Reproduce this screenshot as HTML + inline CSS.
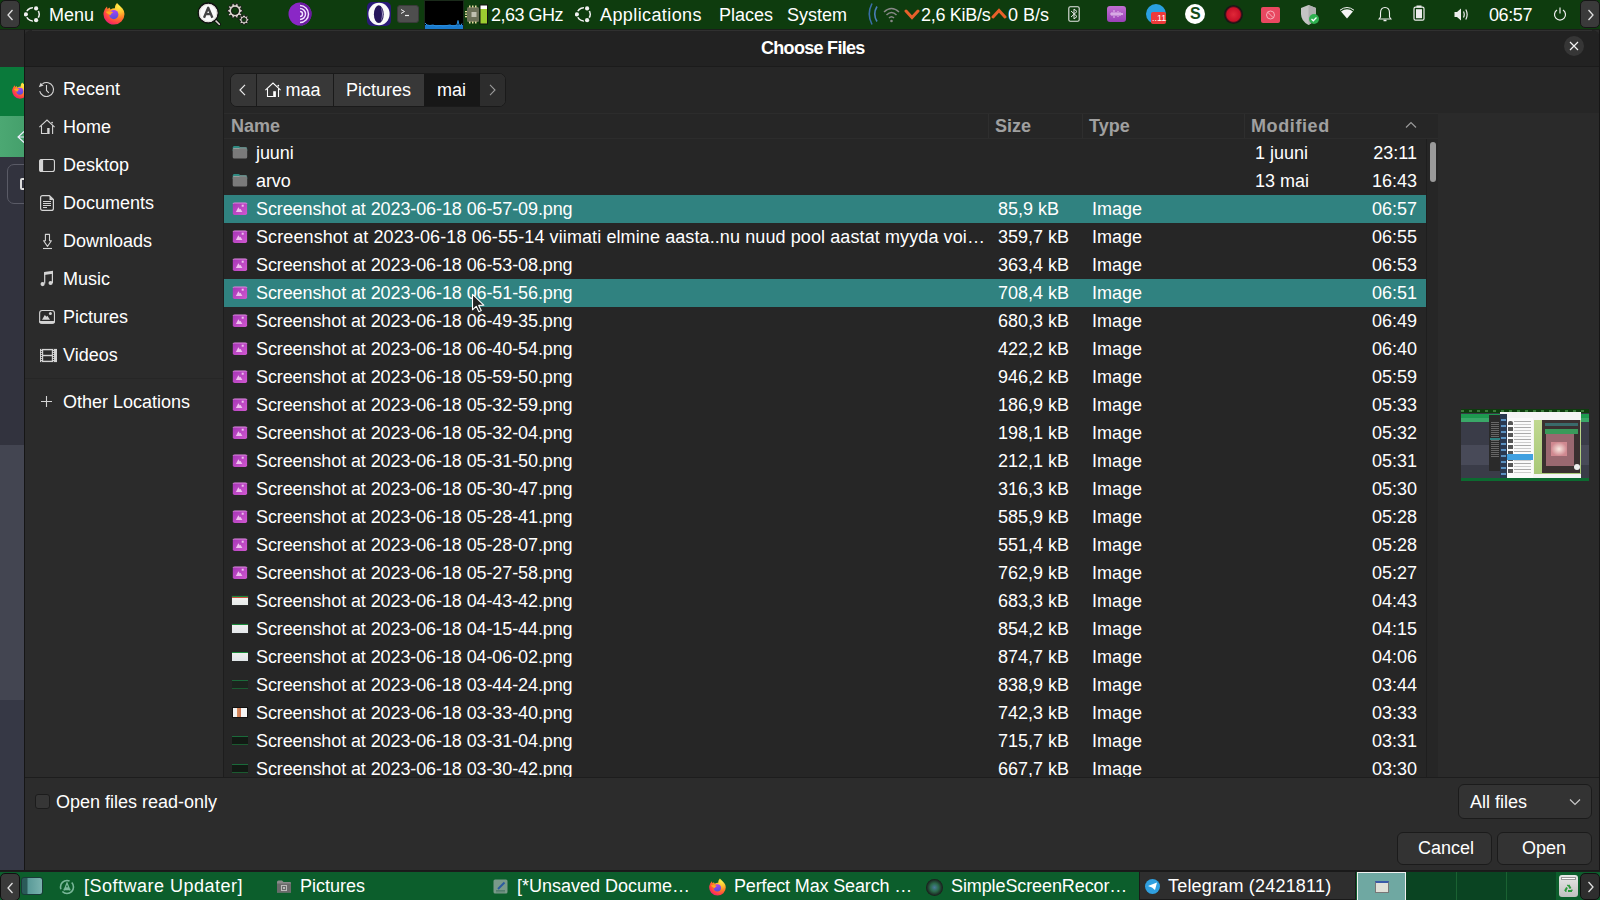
<!DOCTYPE html>
<html><head><meta charset="utf-8">
<style>
*{margin:0;padding:0;box-sizing:border-box}
html,body{width:1600px;height:900px;overflow:hidden;background:#2a2a2a;font-family:"Liberation Sans",sans-serif;font-size:18px;color:#fff}
.a{position:absolute}
.t{position:absolute;white-space:nowrap;line-height:1}
#panel{left:0;top:0;width:1600px;height:30px;background:#0e3c0e;border-bottom:1px solid #1a1f1a}
#dlg{left:24px;top:30px;width:1576px;height:840px;background:#2c2c2c}
#title{left:0;top:0;width:1576px;height:37px;background:#222;border-bottom:1px solid #1b1b1b;border-top-left-radius:8px;border-top-right-radius:8px}
#side{left:0;top:37px;width:200px;height:710px;background:#2b2b2b;border-right:1px solid #1d1d1d}
#main{left:200px;top:37px;width:1376px;height:710px;background:#262626}
#bottom{left:0;top:747px;width:1576px;height:93px;background:#2c2c2c;border-top:1px solid #1d1d1d}
#taskbar{left:0;top:870px;width:1600px;height:30px;background:#0c5e2c;border-top:1px solid #1a1a1a}
.row{position:absolute;left:0;width:1202px;height:28px}
.sel{background:#308280}
#pbar{left:6px;top:6px;width:276px;height:34px;border:1px solid #1a1a1a;border-radius:7px;overflow:hidden;background:#383838}
.pb{position:absolute;top:0;height:32px;background:#383838}
#hdr{left:0;top:46px;width:1214px;height:26px;border-top:1px solid #2c2c2c;border-bottom:1px solid #2c2c2c}
.hd{top:3px;font-weight:bold;color:#a0a0a0}
.hsep{top:0;width:1px;height:24px;background:#2e2e2e}
#list{left:0;top:0;width:1202px;height:710px;overflow:hidden}
.row span{position:absolute;top:0;line-height:28px;white-space:nowrap}
.c1{left:32px;letter-spacing:-0.1px}.c2{left:774px}.c3{left:868px}.c4{left:1031px}.c5{right:9px}
.ic{position:absolute}
i.ic{left:8px;top:9px;width:16px;height:9px}
.ic.th1{background:linear-gradient(#1a8a3a 0,#1a8a3a 1px,#c8503a 1px,#c8503a 2px,#f2f2f2 2px,#e8ecea 100%);box-shadow:0 0 0 0.5px #333}
.ic.th2{background:linear-gradient(#1a8a3a 0,#1a8a3a 1px,#f0f0f0 1px,#e4e8ea 100%);box-shadow:0 0 0 0.5px #333}
.ic.th3{background:linear-gradient(#1a8a3a 0,#1a8a3a 1px,#eef0ee 1px,#e0e6e8 100%)}
.ic.th3b{background:linear-gradient(#1a6a3a 0,#1a6a3a 1px,#1c241e 1px,#1c241e 8px,#1a5a30 8px)}
.ic.th4{top:8px;height:11px;background:linear-gradient(90deg,#f4f4f4 0,#f4f4f4 4px,#d89060 4px,#c87050 8px,#f4f4f4 8px);border:1px solid #111}
.ic.th5{background:linear-gradient(#1a6a3a 0,#1a6a3a 1px,#121a14 1px,#121a14 8px,#1a5a30 8px)}
#vscroll{left:1202px;top:72px;width:12px;height:638px;background:#262626;border-left:1px solid #1e1e1e}
#prev{left:1214px;top:46px;width:162px;height:664px;background:#2a2a2a}
.btn{background:#333;border:1px solid #1b1b1b;border-radius:6px}
.ffx{border-radius:50%;background:radial-gradient(circle at 48% 55%,#6a3ad8 0,#7a44e0 24%,#f04a7a 26%,#ff6a30 60%,#ffb020 80%)}
</style></head><body>
<svg width="0" height="0" style="position:absolute"><defs>
<radialGradient id="ffg" cx="0.75" cy="0.15" r="1.0"><stop offset="0" stop-color="#fff04a"/><stop offset="0.3" stop-color="#ffc030"/><stop offset="0.55" stop-color="#ff7a28"/><stop offset="0.8" stop-color="#ff3a4a"/><stop offset="1" stop-color="#e0158a"/></radialGradient>
<linearGradient id="ffp" x1="0.3" y1="0" x2="0.5" y2="1"><stop offset="0" stop-color="#b040f8"/><stop offset="1" stop-color="#5050d8"/></linearGradient>
<symbol id="ffx" viewBox="0 0 24 24"><path d="M12 23.5 A10.5 10.5 0 0 1 1.6 11.5 Q2.5 7.5 5 5.5 L5.5 8 L7.5 6.5 L8.5 8.5 Q10.5 7 13 7.2 Q12.5 4.5 15 2 Q18.5 5.5 20.5 7.5 Q22.5 10 22.5 13 A10.5 10.5 0 0 1 12 23.5 Z" fill="url(#ffg)"/><circle cx="11.8" cy="13.6" r="4.6" fill="url(#ffp)"/><path d="M3.5 10.8 Q7.5 9.3 11.2 11.3 Q9 12.3 8.4 14.2 Q5.5 13 3.5 10.8 Z" fill="#ffa81e"/></symbol>
</defs></svg>
<!-- left background strip -->
<div class="a" style="left:0;top:30px;width:24px;height:37px;background:#2b2b2b"></div>
<div class="a" style="left:0;top:67px;width:24px;height:49px;background:#0a7a3b"></div>
<div class="a" style="left:0;top:116px;width:24px;height:41px;background:linear-gradient(90deg,#4ca873,#45a06c)"></div>
<div class="a" style="left:0;top:157px;width:24px;height:288px;background:#32333e"></div>
<svg class="a" style="left:11px;top:81px" width="18" height="18" viewBox="0 0 24 24"><use href="#ffx"/></svg>
<svg class="a" style="left:16px;top:130px" width="10" height="14" viewBox="0 0 10 14"><path d="M8 1.5 L2 7 L8 12.5 M2 7 H10" stroke="#eef" stroke-width="1.1" fill="none"/></svg>
<div class="a" style="left:7px;top:164px;width:30px;height:40px;border:1px solid #5a5b66;border-radius:7px"></div>
<div class="a" style="left:20px;top:178px;width:6px;height:12px;border:2px solid #ddd;border-radius:2px"></div>
<div class="a" style="left:0;top:445px;width:24px;height:255px;background:#434551"></div>
<div class="a" style="left:0;top:700px;width:24px;height:170px;background:#363845"></div>

<div id="panel" class="a">
  <div class="a" style="left:0;top:0;width:20px;height:28px;background:#3a3a3a;border:1px solid #161616;border-radius:5px"><svg class="a" style="left:5px;top:8px" width="8" height="12" viewBox="0 0 8 12"><path d="M6.5 1 L2 6 L6.5 11" stroke="#e0e0e0" stroke-width="1.3" fill="none"/></svg></div>
  <svg class="a" style="left:24px;top:5px" width="18" height="18" viewBox="0 0 18 18"><circle cx="8.7" cy="9.3" r="6.6" fill="none" stroke="#f2f2f2" stroke-width="1.5"/><g fill="#0e3c0e"><circle cx="12.1" cy="3.4" r="3.3"/><circle cx="1.9" cy="9.3" r="3.3"/><circle cx="12.1" cy="15.2" r="3.3"/></g><g fill="#f2f2f2"><circle cx="12.1" cy="3.4" r="2.1"/><circle cx="1.9" cy="9.3" r="2.1"/><circle cx="12.1" cy="15.2" r="2.1"/></g></svg>
  <span class="t" style="left:49px;top:6px">Menu</span>
  <svg class="a" style="left:102px;top:1px" width="24" height="24"><use href="#ffx"/></svg>
  <svg class="a" style="left:196px;top:1px" width="26" height="26" viewBox="0 0 26 26"><path d="M18.5 18.5 L23.3 23.3" stroke="#111" stroke-width="3.4" stroke-linecap="round"/><path d="M18.5 18.5 L23.3 23.3" stroke="#d8d4cc" stroke-width="1.6" stroke-linecap="round"/><circle cx="12.2" cy="12" r="10" fill="#fafafa" stroke="#111" stroke-width="1.3"/><circle cx="12.2" cy="12" r="8.6" fill="none" stroke="#d8d4cc" stroke-width="0.8"/><path d="M8 16.8 L12.2 6.8 L16.4 16.8 M9.6 13.2 H14.8" stroke="#444" stroke-width="2.3" fill="none" stroke-linejoin="round"/></svg>
  <svg class="a" style="left:226px;top:2px" width="25" height="25" viewBox="0 0 25 25"><path d="M16.55 7.96 L16.55 9.64 L14.88 10.01 L14.47 11.27 L15.60 12.56 L14.62 13.92 L13.04 13.24 L11.97 14.01 L12.13 15.72 L10.54 16.24 L9.66 14.76 L8.34 14.76 L7.46 16.24 L5.87 15.72 L6.03 14.01 L4.96 13.24 L3.38 13.92 L2.40 12.56 L3.53 11.27 L3.12 10.01 L1.45 9.64 L1.45 7.96 L3.12 7.59 L3.53 6.33 L2.40 5.04 L3.38 3.68 L4.96 4.36 L6.03 3.59 L5.87 1.88 L7.46 1.36 L8.34 2.84 L9.66 2.84 L10.54 1.36 L12.13 1.88 L11.97 3.59 L13.04 4.36 L14.62 3.68 L15.60 5.04 L14.47 6.33 L14.88 7.59 Z" fill="#d8d4cc" stroke="#111" stroke-width="0.9"/><circle cx="9" cy="8.8" r="3.6" fill="#0e3c0e" stroke="#111" stroke-width="0.9"/><path d="M22.95 17.11 L22.95 18.49 L21.77 18.78 L21.36 19.77 L21.99 20.81 L21.01 21.79 L19.97 21.16 L18.98 21.57 L18.69 22.75 L17.31 22.75 L17.02 21.57 L16.03 21.16 L14.99 21.79 L14.01 20.81 L14.64 19.77 L14.23 18.78 L13.05 18.49 L13.05 17.11 L14.23 16.82 L14.64 15.83 L14.01 14.79 L14.99 13.81 L16.03 14.44 L17.02 14.03 L17.31 12.85 L18.69 12.85 L18.98 14.03 L19.97 14.44 L21.01 13.81 L21.99 14.79 L21.36 15.83 L21.77 16.82 Z" fill="#d8d4cc" stroke="#111" stroke-width="0.9"/><circle cx="18" cy="17.8" r="2.1" fill="#0e3c0e" stroke="#111" stroke-width="0.8"/></svg>
  <svg class="a" style="left:288px;top:2px" width="24" height="24" viewBox="0 0 24 24"><circle cx="12" cy="12" r="11.5" fill="#8a27c6"/><path d="M12 0.5 A11.5 11.5 0 0 1 12 23.5 Z" fill="#6a1aa0"/><path d="M12 3.5 A8.5 8.5 0 0 1 12 20.5 M12 6.5 A5.5 5.5 0 0 1 12 17.5 M12 9.5 A2.5 2.5 0 0 1 12 14.5" stroke="#f0e0ff" stroke-width="1.5" fill="none"/></svg>
  <svg class="a" style="left:367px;top:2px" width="24" height="24" viewBox="0 0 24 24"><rect x="0" y="0" width="24" height="24" rx="5" fill="#2a1a78"/><ellipse cx="12" cy="12" rx="10.6" ry="11.2" fill="#fafafa"/><ellipse cx="11.8" cy="12.2" rx="4.9" ry="8.9" fill="#24145a"/><path d="M14 4.5 Q17.5 12 14 19.8 Q16 12 14 4.5 Z" fill="#d8d0f0"/></svg>
  <div class="a" style="left:397px;top:5px;width:22px;height:18px;background:#4e4e4e;border-radius:3px;border:1px solid #3a3a3a"><svg class="a" style="left:2px;top:2px" width="10" height="9" viewBox="0 0 10 9"><path d="M1 1.5 L4.5 3.5 L1 5.5" stroke="#f0f0f0" stroke-width="1" fill="none"/><path d="M5 7.5 H9" stroke="#f0f0f0" stroke-width="1.2"/></svg></div>
  <div class="a" style="left:424px;top:0;width:40px;height:29px;background:#000;border:1px solid #1a2a1a;border-bottom:none"><div class="a" style="left:0;top:24px;width:38px;height:4px;background:#1a7acc"></div><svg class="a" style="left:0;top:19px" width="38" height="7" viewBox="0 0 38 7"><path d="M0 3 L2 5 L5 5.5 L8 5 L11 6 L15 5.5 L18 6 L22 5.5 L25 5 L28 6 L32 5 L33 0.5 L34 5 L36 5.5 L37 3.5" stroke="#2a90e0" stroke-width="1" fill="none"/></svg></div>
  <svg class="a" style="left:464px;top:4px" width="25" height="21" viewBox="0 0 25 21"><rect x="3" y="3" width="12" height="15" rx="1.5" fill="#6c7058"/><rect x="7.5" y="8" width="5" height="5" fill="#c0c0b0"/><g fill="#e8e0a0"><rect x="5" y="1.5" width="1.5" height="2"/><rect x="8" y="1.5" width="1.5" height="2"/><rect x="11" y="1.5" width="1.5" height="2"/><rect x="5" y="17.5" width="1.5" height="2"/><rect x="8" y="17.5" width="1.5" height="2"/><rect x="11" y="17.5" width="1.5" height="2"/><rect x="1" y="7" width="2" height="1.3"/><rect x="1" y="9.5" width="2" height="1.3"/><rect x="1" y="12" width="2" height="1.3"/></g><rect x="15.5" y="0.5" width="8.5" height="20" fill="#111"/><rect x="16.5" y="1.5" width="6.5" height="3.5" fill="#fff"/><rect x="16.5" y="5" width="6.5" height="14.5" fill="#9ccc30"/></svg>
  
  <span class="t" style="left:491px;top:6px;letter-spacing:-0.5px">2,63 GHz</span>
  <svg class="a" style="left:575px;top:5px" width="18" height="18" viewBox="0 0 18 18"><circle cx="8.7" cy="9.3" r="6.6" fill="none" stroke="#f2f2f2" stroke-width="1.5"/><g fill="#0e3c0e"><circle cx="12.1" cy="3.4" r="3.3"/><circle cx="1.9" cy="9.3" r="3.3"/><circle cx="12.1" cy="15.2" r="3.3"/></g><g fill="#f2f2f2"><circle cx="12.1" cy="3.4" r="2.1"/><circle cx="1.9" cy="9.3" r="2.1"/><circle cx="12.1" cy="15.2" r="2.1"/></g></svg>
  <span class="t" style="left:600px;top:6px;letter-spacing:0.4px">Applications</span>
  <span class="t" style="left:719px;top:6px">Places</span>
  <span class="t" style="left:787px;top:6px">System</span>
  <svg class="a" style="left:866px;top:2px" width="14" height="24" viewBox="0 0 14 24"><path d="M6 1.5 Q0.5 12 6 22.5" stroke="#3a6ea8" stroke-width="1.6" fill="none"/><path d="M11 4.5 Q6.5 12 11 19.5" stroke="#4a7eb8" stroke-width="1.6" fill="none"/></svg>
  <svg class="a" style="left:883px;top:6px" width="17" height="17" viewBox="0 0 17 17"><path d="M1 6 Q8.5 -1 16 6 M3.5 9 Q8.5 4 13.5 9 M6 12 Q8.5 9.5 11 12" stroke="#888" stroke-width="1.5" fill="none"/><circle cx="8.5" cy="15" r="1.3" fill="#888"/></svg>
  <svg class="a" style="left:904px;top:9px" width="16" height="11" viewBox="0 0 16 11"><path d="M2 2 L8 8.5 L14 2" stroke="#e8602a" stroke-width="3" fill="none" stroke-linecap="round"/></svg>
  <span class="t" style="left:921px;top:6px;letter-spacing:-0.3px">2,6 KiB/s</span>
  <svg class="a" style="left:991px;top:8px" width="16" height="11" viewBox="0 0 16 11"><path d="M2 9 L8 2.5 L14 9" stroke="#e8602a" stroke-width="3" fill="none" stroke-linecap="round"/></svg>
  <span class="t" style="left:1008px;top:6px">0 B/s</span>
  <svg class="a" style="left:1068px;top:6px" width="12" height="16" viewBox="0 0 12 16"><rect x="0.8" y="0.8" width="10.4" height="14.4" rx="1.5" fill="none" stroke="#e6e6e6" stroke-width="1.1"/><path d="M3 5 L9 10.5 L6 13 V3 L9 5.5 L3 11" stroke="#e6e6e6" stroke-width="1" fill="none"/></svg>
  <div class="a" style="left:1107px;top:6px;width:19px;height:16px;border-radius:3px;background:linear-gradient(#c070d0,#9a40b8)"><svg class="a" style="left:2px;top:3px" width="15" height="10" viewBox="0 0 15 10"><path d="M1 5 H14 M3 3 V7 M5 1 V9 M7 3 V7 M9 2 V8 M11 3 V7 M13 4 V6" stroke="#f0d8f8" stroke-width="0.8"/></svg></div>
  <div class="a" style="left:1146px;top:4px;width:20px;height:20px;border-radius:50%;background:#2aa0e0"></div>
  <div class="a" style="left:1151px;top:12px;width:15px;height:12px;border-radius:2px;background:#ee3a3a"><span class="t" style="left:1px;top:2px;font-size:9px;color:#fff">..11</span></div>
  <div class="a" style="left:1185px;top:4px;width:20px;height:20px;border-radius:50%;background:#fff"><span class="t" style="left:5px;top:2px;font-size:16px;font-weight:bold;color:#134a1a">S</span></div>
  <div class="a" style="left:1224px;top:5px;width:19px;height:19px;border-radius:50%;background:radial-gradient(circle at 50% 50%,#e02838 0,#c81028 50%,#501018 58%,#161616 64%,#222 100%)"></div>
  <div class="a" style="left:1261px;top:7px;width:19px;height:16px;border-radius:2px;background:#e84860"><svg class="a" style="left:4px;top:3px" width="11" height="11" viewBox="0 0 11 11"><circle cx="5.5" cy="5" r="4" fill="none" stroke="#f8b0bc" stroke-width="1"/><path d="M2.8 2.3 L8.2 7.7" stroke="#f8b0bc" stroke-width="1"/></svg></div>
  <svg class="a" style="left:1300px;top:4px" width="20" height="22" viewBox="0 0 20 22"><path d="M8.5 1 L16 4 V10 Q16 17 8.5 21 Q1 17 1 10 V4 Z" fill="#c4c4c4"/><path d="M8.5 1 L16 4 V10 Q16 17 8.5 21 Z" fill="#b0b0b0"/><circle cx="14" cy="15" r="5" fill="#2fb050"/><path d="M11.5 15 L13.3 16.8 L16.5 13.5" stroke="#fff" stroke-width="1.3" fill="none"/></svg>
  <svg class="a" style="left:1339px;top:6px" width="16" height="14" viewBox="0 0 16 14"><path d="M1 4.2 Q8 -1.2 15 4.2" stroke="#f4f4f4" stroke-width="1" fill="none"/><path d="M2 5.5 Q8 1 14 5.5 L8 12.5 Z" fill="#f4f4f4"/></svg>
  <svg class="a" style="left:1378px;top:6px" width="14" height="16" viewBox="0 0 14 16"><path d="M7 1.5 Q2.5 1.5 2.5 7 V11 L1 13 H13 L11.5 11 V7 Q11.5 1.5 7 1.5 Z" fill="none" stroke="#eee" stroke-width="1.1"/><path d="M5.5 14.5 H8.5" stroke="#eee" stroke-width="1.5"/></svg>
  <svg class="a" style="left:1413px;top:5px" width="12" height="16" viewBox="0 0 12 16"><rect x="3.5" y="0.5" width="5" height="2" fill="#eee"/><rect x="1" y="2.2" width="10" height="13" rx="1.5" fill="none" stroke="#eee" stroke-width="1.2"/><rect x="3" y="4.2" width="6" height="9" fill="#eee"/></svg>
  <svg class="a" style="left:1454px;top:8px" width="15" height="13" viewBox="0 0 15 13"><path d="M0.5 4 H3 L7 0.5 V12.5 L3 9 H0.5 Z" fill="#eee"/><path d="M9.5 3.5 Q11 6.5 9.5 9.5 M11.8 1.5 Q14.5 6.5 11.8 11.5" stroke="#eee" stroke-width="1.2" fill="none"/></svg>
  <span class="t" style="left:1489px;top:6px;letter-spacing:-0.4px">06:57</span>
  <svg class="a" style="left:1553px;top:7px" width="14" height="14" viewBox="0 0 14 14"><path d="M4 3 A5.5 5.5 0 1 0 10 3" stroke="#eee" stroke-width="1.2" fill="none"/><path d="M7 0.5 V6.5" stroke="#eee" stroke-width="1.2"/></svg>
  <div class="a" style="left:1580px;top:0;width:20px;height:28px;background:#3a3a3a;border:1px solid #161616;border-radius:5px"><svg class="a" style="left:6px;top:8px" width="8" height="12" viewBox="0 0 8 12"><path d="M1.5 1 L6 6 L1.5 11" stroke="#e0e0e0" stroke-width="1.3" fill="none"/></svg></div>
</div>

<div id="dlg" class="a">
  <div class="a" style="left:0;top:0;width:1px;height:840px;background:#161616;z-index:5"></div>
  <div class="a" style="left:1575px;top:0;width:1px;height:840px;background:#161616;z-index:5"></div>
  <div id="title" class="a"><div class="a" style="left:8px;top:0;width:1560px;height:1px;background:#303030"></div><div class="t" style="left:737px;top:9px;font-weight:bold;font-size:18px;letter-spacing:-0.7px">Choose Files</div><div class="a" style="left:1540px;top:6px;width:20px;height:20px;border-radius:50%;background:#363636"><svg class="a" style="left:5px;top:5px" width="10" height="10" viewBox="0 0 10 10"><path d="M1 1 L9 9 M9 1 L1 9" stroke="#f4f4f4" stroke-width="1.2"/></svg></div></div>
  <div id="side" class="a">
<svg class="a" style="left:14px;top:14px" width="20" height="20" viewBox="0 0 20 20"><path d="M1.7 10.1 A7 7 0 1 0 4.5 2.8" fill="none" stroke="#d4d4d4" stroke-width="1.1"/><path d="M0.8 6.2 L2.6 1.8 L5.6 4.6 Z" fill="#d4d4d4"/><path d="M8.5 4 V9.5 L10.9 11.9" fill="none" stroke="#d4d4d4" stroke-width="1.1"/></svg><span class="t" style="left:39px;top:13px">Recent</span>
<svg class="a" style="left:14px;top:49px" width="20" height="20" viewBox="0 0 20 20"><path d="M1.4 11.2 L9 4 L16.6 11.2" fill="none" stroke="#d4d4d4" stroke-width="1.1"/><path d="M3.5 9.5 V17.5 H9.5" fill="none" stroke="#d4d4d4" stroke-width="1.1"/><rect x="9.2" y="12" width="2.4" height="6" fill="#d4d4d4"/><path d="M14.6 9.5 V18" fill="none" stroke="#d4d4d4" stroke-width="1.1"/><circle cx="14.1" cy="6.6" r="0.9" fill="#d4d4d4"/></svg><span class="t" style="left:39px;top:51px">Home</span>
<svg class="a" style="left:14px;top:87px" width="20" height="20" viewBox="0 0 20 20"><rect x="1.65" y="5.55" width="14.8" height="12" rx="2" fill="none" stroke="#d4d4d4" stroke-width="1.1"/><path d="M1.1 7.5 Q1.1 5 3.5 5 H5.1 V18.1 H3.5 Q1.1 18.1 1.1 15.6 Z" fill="#d4d4d4"/></svg><span class="t" style="left:39px;top:89px">Desktop</span>
<svg class="a" style="left:14px;top:125px" width="20" height="20" viewBox="0 0 20 20"><path d="M4.6 3.6 H11.5 L15.4 7.5 V16.4 Q15.4 18.4 13.4 18.4 H4.6 Q2.6 18.4 2.6 16.4 V5.6 Q2.6 3.6 4.6 3.6 Z" fill="none" stroke="#d4d4d4" stroke-width="1.2" stroke-linejoin="round"/><path d="M11.5 3.6 V8 H15.4 Z" fill="#d4d4d4"/><path d="M5 9.5 H13 M5 11.5 H13 M5 13.5 H13 M5 15.5 H9" stroke="#d4d4d4" stroke-width="1"/></svg><span class="t" style="left:39px;top:127px">Documents</span>
<svg class="a" style="left:14px;top:163px" width="20" height="20" viewBox="0 0 20 20"><path d="M7.4 4.4 H11.5 V10.8 H13.4 L9.5 16.4 L5.6 10.8 H7.4 Z" fill="none" stroke="#d4d4d4" stroke-width="1.1" stroke-linejoin="round"/><path d="M5 18.5 H14" stroke="#d4d4d4" stroke-width="1.1"/></svg><span class="t" style="left:39px;top:165px">Downloads</span>
<svg class="a" style="left:14px;top:200px" width="20" height="20" viewBox="0 0 20 20"><path d="M6.7 16.6 V5.4 M14.4 16 V4" stroke="#d4d4d4" stroke-width="1.2"/><path d="M6.1 5 L15 3.8 V6.8 L6.1 8 Z" fill="#d4d4d4"/><circle cx="4.6" cy="17.1" r="2.1" fill="#d4d4d4"/><circle cx="12.6" cy="16" r="2.1" fill="#d4d4d4"/></svg><span class="t" style="left:39px;top:203px">Music</span>
<svg class="a" style="left:14px;top:238px" width="20" height="20" viewBox="0 0 20 20"><rect x="1.65" y="5.45" width="14.8" height="12.8" rx="2.5" fill="none" stroke="#d4d4d4" stroke-width="1.1"/><path d="M1.1 15.9 H17 V16.3 Q17 18.8 14.5 18.8 H3.6 Q1.1 18.8 1.1 16.3 Z" fill="#d4d4d4"/><path d="M4 14.8 L6.8 10 L8.5 11.7 L9.4 10.8 L12 14.8 Z" fill="#d4d4d4"/><circle cx="12.4" cy="8.4" r="1.5" fill="#d4d4d4"/></svg><span class="t" style="left:39px;top:241px">Pictures</span>
<svg class="a" style="left:14px;top:277px" width="20" height="20" viewBox="0 0 20 20"><rect x="2" y="4.9" width="17" height="13.2" fill="#d4d4d4"/><rect x="5.2" y="6.3" width="8.6" height="4.5" fill="#2b2b2b"/><rect x="5.2" y="12.2" width="8.6" height="4.5" fill="#2b2b2b"/><g fill="#2b2b2b"><circle cx="3.5" cy="7.5" r="0.6"/><circle cx="3.5" cy="9.4" r="0.6"/><circle cx="3.5" cy="11.4" r="0.6"/><circle cx="3.5" cy="13.4" r="0.6"/><circle cx="3.5" cy="15.4" r="0.6"/><circle cx="15.5" cy="7.5" r="0.6"/><circle cx="15.5" cy="9.4" r="0.6"/><circle cx="15.5" cy="11.4" r="0.6"/><circle cx="15.5" cy="13.4" r="0.6"/><circle cx="15.5" cy="15.4" r="0.6"/><rect x="3" y="4.9" width="1" height="0.8"/><rect x="15" y="4.9" width="1" height="0.8"/><rect x="3" y="17.3" width="1" height="0.8"/><rect x="15" y="17.3" width="1" height="0.8"/></g></svg><span class="t" style="left:39px;top:279px">Videos</span>
<div class="a" style="left:0;top:311px;width:199px;height:1px;background:#262626"></div>
<svg class="a" style="left:16px;top:328px" width="13" height="13" viewBox="0 0 13 13"><path d="M6.5 1 V12 M1 6.5 H12" stroke="#d4d4d4" stroke-width="1.1"/></svg><span class="t" style="left:39px;top:326px">Other Locations</span>
</div>
  <div id="main" class="a">
    <div class="a" id="pbar">
      <div class="pb" style="left:0;width:25px;background:#363636"><svg class="a" style="left:8px;top:10px" width="8" height="12" viewBox="0 0 8 12"><path d="M6 0.8 L1 6 L6 11.2" stroke="#e8e8e8" stroke-width="1.2" fill="none"/></svg></div>
      <div class="pb" style="left:25px;width:77px;border-left:1px solid #1a1a1a"><svg class="a" style="left:7px;top:5px" width="20" height="20" viewBox="0 0 20 20"><path d="M1.4 11.2 L9 4 L16.6 11.2" fill="none" stroke="#fff" stroke-width="1.1"/><path d="M3.5 9.5 V17.5 H9.5" fill="none" stroke="#fff" stroke-width="1.1"/><rect x="9.2" y="12.2" width="2.7" height="5.8" fill="#fff"/><path d="M14.5 9.5 V18" fill="none" stroke="#fff" stroke-width="1.1"/><circle cx="14.3" cy="6.7" r="0.9" fill="#fff"/></svg><span class="t" style="left:28.5px;top:7px">maa</span></div>
      <div class="pb" style="left:102px;width:91px;border-left:1px solid #1a1a1a"><span class="t" style="left:12px;top:7px">Pictures</span></div>
      <div class="pb" style="left:193px;width:56px;background:#171717"><span class="t" style="left:13px;top:7px">mai</span></div>
      <div class="pb" style="left:249px;width:25px;background:#2d2d2d"><svg class="a" style="left:9px;top:10px" width="8" height="12" viewBox="0 0 8 12"><path d="M1 0.8 L6 6 L1 11.2" stroke="#9a9a9a" stroke-width="1.1" fill="none"/></svg></div>
    </div>
    <div class="a" id="hdr">
      <span class="t hd" style="left:7px">Name</span>
      <div class="a hsep" style="left:764px"></div><span class="t hd" style="left:771px">Size</span>
      <div class="a hsep" style="left:858px"></div><span class="t hd" style="left:865px">Type</span>
      <div class="a hsep" style="left:1020px"></div><span class="t hd" style="left:1027px;letter-spacing:0.6px">Modified</span>
      <svg class="a" style="left:1181px;top:7px" width="12" height="8" viewBox="0 0 12 8"><path d="M1 6.5 L6 1.5 L11 6.5" stroke="#9a9a9a" stroke-width="1.2" fill="none"/></svg>
    </div>
    <div class="a" id="list">
<div class="row" style="top:72px"><svg class="ic" style="left:8px;top:6px" width="16" height="15" viewBox="0 0 16 15"><path d="M0.7 2.5 Q0.7 0.9 2.2 0.9 H6.5 Q7.3 0.9 7.6 1.5 L8 2.2 H13.5 Q15.2 2.2 15.2 3.8 V6 H0.7 Z" fill="#2f8a82"/><rect x="0.7" y="3.2" width="14.5" height="10.3" rx="1.6" fill="#7a7a7a"/><path d="M1.2 3.5 H7.3 L7.8 2.9 H14.7" stroke="#a9a9a9" stroke-width="0.7" fill="none"/></svg><span class="c1">juuni</span><span class="c4">1 juuni</span><span class="c5">23:11</span></div>
<div class="row" style="top:100px"><svg class="ic" style="left:8px;top:6px" width="16" height="15" viewBox="0 0 16 15"><path d="M0.7 2.5 Q0.7 0.9 2.2 0.9 H6.5 Q7.3 0.9 7.6 1.5 L8 2.2 H13.5 Q15.2 2.2 15.2 3.8 V6 H0.7 Z" fill="#2f8a82"/><rect x="0.7" y="3.2" width="14.5" height="10.3" rx="1.6" fill="#7a7a7a"/><path d="M1.2 3.5 H7.3 L7.8 2.9 H14.7" stroke="#a9a9a9" stroke-width="0.7" fill="none"/></svg><span class="c1">arvo</span><span class="c4">13 mai</span><span class="c5">16:43</span></div>
<div class="row sel" style="top:128px"><svg class="ic" style="left:8px;top:7px" width="16" height="14" viewBox="0 0 16 14"><defs><linearGradient id="mg" x1="0" y1="0" x2="1" y2="1"><stop offset="0" stop-color="#a636b6"/><stop offset="1" stop-color="#d058d0"/></linearGradient></defs><rect x="0.8" y="0.8" width="14.3" height="12.2" rx="1.8" fill="url(#mg)"/><path d="M1 1.8 Q1 1 2.5 1 H13.5 Q15 1 15 1.8" stroke="#e8a0e8" stroke-width="0.8" fill="none"/><path d="M3.9 10 L6.4 5.3 L7.8 7.5 L8.4 6.8 L10.4 10 Z" fill="#eec0ee"/><rect x="9.7" y="2.7" width="2" height="2" fill="#eec0ee"/></svg><span class="c1">Screenshot at 2023-06-18 06-57-09.png</span><span class="c2">85,9 kB</span><span class="c3">Image</span><span class="c5">06:57</span></div>
<div class="row" style="top:156px"><svg class="ic" style="left:8px;top:7px" width="16" height="14" viewBox="0 0 16 14"><defs><linearGradient id="mg" x1="0" y1="0" x2="1" y2="1"><stop offset="0" stop-color="#a636b6"/><stop offset="1" stop-color="#d058d0"/></linearGradient></defs><rect x="0.8" y="0.8" width="14.3" height="12.2" rx="1.8" fill="url(#mg)"/><path d="M1 1.8 Q1 1 2.5 1 H13.5 Q15 1 15 1.8" stroke="#e8a0e8" stroke-width="0.8" fill="none"/><path d="M3.9 10 L6.4 5.3 L7.8 7.5 L8.4 6.8 L10.4 10 Z" fill="#eec0ee"/><rect x="9.7" y="2.7" width="2" height="2" fill="#eec0ee"/></svg><span class="c1" style="letter-spacing:0.1px">Screenshot at 2023-06-18 06-55-14 viimati elmine aasta..nu nuud pool aastat myyda voi…</span><span class="c2">359,7 kB</span><span class="c3">Image</span><span class="c5">06:55</span></div>
<div class="row" style="top:184px"><svg class="ic" style="left:8px;top:7px" width="16" height="14" viewBox="0 0 16 14"><defs><linearGradient id="mg" x1="0" y1="0" x2="1" y2="1"><stop offset="0" stop-color="#a636b6"/><stop offset="1" stop-color="#d058d0"/></linearGradient></defs><rect x="0.8" y="0.8" width="14.3" height="12.2" rx="1.8" fill="url(#mg)"/><path d="M1 1.8 Q1 1 2.5 1 H13.5 Q15 1 15 1.8" stroke="#e8a0e8" stroke-width="0.8" fill="none"/><path d="M3.9 10 L6.4 5.3 L7.8 7.5 L8.4 6.8 L10.4 10 Z" fill="#eec0ee"/><rect x="9.7" y="2.7" width="2" height="2" fill="#eec0ee"/></svg><span class="c1">Screenshot at 2023-06-18 06-53-08.png</span><span class="c2">363,4 kB</span><span class="c3">Image</span><span class="c5">06:53</span></div>
<div class="row sel" style="top:212px"><svg class="ic" style="left:8px;top:7px" width="16" height="14" viewBox="0 0 16 14"><defs><linearGradient id="mg" x1="0" y1="0" x2="1" y2="1"><stop offset="0" stop-color="#a636b6"/><stop offset="1" stop-color="#d058d0"/></linearGradient></defs><rect x="0.8" y="0.8" width="14.3" height="12.2" rx="1.8" fill="url(#mg)"/><path d="M1 1.8 Q1 1 2.5 1 H13.5 Q15 1 15 1.8" stroke="#e8a0e8" stroke-width="0.8" fill="none"/><path d="M3.9 10 L6.4 5.3 L7.8 7.5 L8.4 6.8 L10.4 10 Z" fill="#eec0ee"/><rect x="9.7" y="2.7" width="2" height="2" fill="#eec0ee"/></svg><span class="c1">Screenshot at 2023-06-18 06-51-56.png</span><span class="c2">708,4 kB</span><span class="c3">Image</span><span class="c5">06:51</span></div>
<div class="row" style="top:240px"><svg class="ic" style="left:8px;top:7px" width="16" height="14" viewBox="0 0 16 14"><defs><linearGradient id="mg" x1="0" y1="0" x2="1" y2="1"><stop offset="0" stop-color="#a636b6"/><stop offset="1" stop-color="#d058d0"/></linearGradient></defs><rect x="0.8" y="0.8" width="14.3" height="12.2" rx="1.8" fill="url(#mg)"/><path d="M1 1.8 Q1 1 2.5 1 H13.5 Q15 1 15 1.8" stroke="#e8a0e8" stroke-width="0.8" fill="none"/><path d="M3.9 10 L6.4 5.3 L7.8 7.5 L8.4 6.8 L10.4 10 Z" fill="#eec0ee"/><rect x="9.7" y="2.7" width="2" height="2" fill="#eec0ee"/></svg><span class="c1">Screenshot at 2023-06-18 06-49-35.png</span><span class="c2">680,3 kB</span><span class="c3">Image</span><span class="c5">06:49</span></div>
<div class="row" style="top:268px"><svg class="ic" style="left:8px;top:7px" width="16" height="14" viewBox="0 0 16 14"><defs><linearGradient id="mg" x1="0" y1="0" x2="1" y2="1"><stop offset="0" stop-color="#a636b6"/><stop offset="1" stop-color="#d058d0"/></linearGradient></defs><rect x="0.8" y="0.8" width="14.3" height="12.2" rx="1.8" fill="url(#mg)"/><path d="M1 1.8 Q1 1 2.5 1 H13.5 Q15 1 15 1.8" stroke="#e8a0e8" stroke-width="0.8" fill="none"/><path d="M3.9 10 L6.4 5.3 L7.8 7.5 L8.4 6.8 L10.4 10 Z" fill="#eec0ee"/><rect x="9.7" y="2.7" width="2" height="2" fill="#eec0ee"/></svg><span class="c1">Screenshot at 2023-06-18 06-40-54.png</span><span class="c2">422,2 kB</span><span class="c3">Image</span><span class="c5">06:40</span></div>
<div class="row" style="top:296px"><svg class="ic" style="left:8px;top:7px" width="16" height="14" viewBox="0 0 16 14"><defs><linearGradient id="mg" x1="0" y1="0" x2="1" y2="1"><stop offset="0" stop-color="#a636b6"/><stop offset="1" stop-color="#d058d0"/></linearGradient></defs><rect x="0.8" y="0.8" width="14.3" height="12.2" rx="1.8" fill="url(#mg)"/><path d="M1 1.8 Q1 1 2.5 1 H13.5 Q15 1 15 1.8" stroke="#e8a0e8" stroke-width="0.8" fill="none"/><path d="M3.9 10 L6.4 5.3 L7.8 7.5 L8.4 6.8 L10.4 10 Z" fill="#eec0ee"/><rect x="9.7" y="2.7" width="2" height="2" fill="#eec0ee"/></svg><span class="c1">Screenshot at 2023-06-18 05-59-50.png</span><span class="c2">946,2 kB</span><span class="c3">Image</span><span class="c5">05:59</span></div>
<div class="row" style="top:324px"><svg class="ic" style="left:8px;top:7px" width="16" height="14" viewBox="0 0 16 14"><defs><linearGradient id="mg" x1="0" y1="0" x2="1" y2="1"><stop offset="0" stop-color="#a636b6"/><stop offset="1" stop-color="#d058d0"/></linearGradient></defs><rect x="0.8" y="0.8" width="14.3" height="12.2" rx="1.8" fill="url(#mg)"/><path d="M1 1.8 Q1 1 2.5 1 H13.5 Q15 1 15 1.8" stroke="#e8a0e8" stroke-width="0.8" fill="none"/><path d="M3.9 10 L6.4 5.3 L7.8 7.5 L8.4 6.8 L10.4 10 Z" fill="#eec0ee"/><rect x="9.7" y="2.7" width="2" height="2" fill="#eec0ee"/></svg><span class="c1">Screenshot at 2023-06-18 05-32-59.png</span><span class="c2">186,9 kB</span><span class="c3">Image</span><span class="c5">05:33</span></div>
<div class="row" style="top:352px"><svg class="ic" style="left:8px;top:7px" width="16" height="14" viewBox="0 0 16 14"><defs><linearGradient id="mg" x1="0" y1="0" x2="1" y2="1"><stop offset="0" stop-color="#a636b6"/><stop offset="1" stop-color="#d058d0"/></linearGradient></defs><rect x="0.8" y="0.8" width="14.3" height="12.2" rx="1.8" fill="url(#mg)"/><path d="M1 1.8 Q1 1 2.5 1 H13.5 Q15 1 15 1.8" stroke="#e8a0e8" stroke-width="0.8" fill="none"/><path d="M3.9 10 L6.4 5.3 L7.8 7.5 L8.4 6.8 L10.4 10 Z" fill="#eec0ee"/><rect x="9.7" y="2.7" width="2" height="2" fill="#eec0ee"/></svg><span class="c1">Screenshot at 2023-06-18 05-32-04.png</span><span class="c2">198,1 kB</span><span class="c3">Image</span><span class="c5">05:32</span></div>
<div class="row" style="top:380px"><svg class="ic" style="left:8px;top:7px" width="16" height="14" viewBox="0 0 16 14"><defs><linearGradient id="mg" x1="0" y1="0" x2="1" y2="1"><stop offset="0" stop-color="#a636b6"/><stop offset="1" stop-color="#d058d0"/></linearGradient></defs><rect x="0.8" y="0.8" width="14.3" height="12.2" rx="1.8" fill="url(#mg)"/><path d="M1 1.8 Q1 1 2.5 1 H13.5 Q15 1 15 1.8" stroke="#e8a0e8" stroke-width="0.8" fill="none"/><path d="M3.9 10 L6.4 5.3 L7.8 7.5 L8.4 6.8 L10.4 10 Z" fill="#eec0ee"/><rect x="9.7" y="2.7" width="2" height="2" fill="#eec0ee"/></svg><span class="c1">Screenshot at 2023-06-18 05-31-50.png</span><span class="c2">212,1 kB</span><span class="c3">Image</span><span class="c5">05:31</span></div>
<div class="row" style="top:408px"><svg class="ic" style="left:8px;top:7px" width="16" height="14" viewBox="0 0 16 14"><defs><linearGradient id="mg" x1="0" y1="0" x2="1" y2="1"><stop offset="0" stop-color="#a636b6"/><stop offset="1" stop-color="#d058d0"/></linearGradient></defs><rect x="0.8" y="0.8" width="14.3" height="12.2" rx="1.8" fill="url(#mg)"/><path d="M1 1.8 Q1 1 2.5 1 H13.5 Q15 1 15 1.8" stroke="#e8a0e8" stroke-width="0.8" fill="none"/><path d="M3.9 10 L6.4 5.3 L7.8 7.5 L8.4 6.8 L10.4 10 Z" fill="#eec0ee"/><rect x="9.7" y="2.7" width="2" height="2" fill="#eec0ee"/></svg><span class="c1">Screenshot at 2023-06-18 05-30-47.png</span><span class="c2">316,3 kB</span><span class="c3">Image</span><span class="c5">05:30</span></div>
<div class="row" style="top:436px"><svg class="ic" style="left:8px;top:7px" width="16" height="14" viewBox="0 0 16 14"><defs><linearGradient id="mg" x1="0" y1="0" x2="1" y2="1"><stop offset="0" stop-color="#a636b6"/><stop offset="1" stop-color="#d058d0"/></linearGradient></defs><rect x="0.8" y="0.8" width="14.3" height="12.2" rx="1.8" fill="url(#mg)"/><path d="M1 1.8 Q1 1 2.5 1 H13.5 Q15 1 15 1.8" stroke="#e8a0e8" stroke-width="0.8" fill="none"/><path d="M3.9 10 L6.4 5.3 L7.8 7.5 L8.4 6.8 L10.4 10 Z" fill="#eec0ee"/><rect x="9.7" y="2.7" width="2" height="2" fill="#eec0ee"/></svg><span class="c1">Screenshot at 2023-06-18 05-28-41.png</span><span class="c2">585,9 kB</span><span class="c3">Image</span><span class="c5">05:28</span></div>
<div class="row" style="top:464px"><svg class="ic" style="left:8px;top:7px" width="16" height="14" viewBox="0 0 16 14"><defs><linearGradient id="mg" x1="0" y1="0" x2="1" y2="1"><stop offset="0" stop-color="#a636b6"/><stop offset="1" stop-color="#d058d0"/></linearGradient></defs><rect x="0.8" y="0.8" width="14.3" height="12.2" rx="1.8" fill="url(#mg)"/><path d="M1 1.8 Q1 1 2.5 1 H13.5 Q15 1 15 1.8" stroke="#e8a0e8" stroke-width="0.8" fill="none"/><path d="M3.9 10 L6.4 5.3 L7.8 7.5 L8.4 6.8 L10.4 10 Z" fill="#eec0ee"/><rect x="9.7" y="2.7" width="2" height="2" fill="#eec0ee"/></svg><span class="c1">Screenshot at 2023-06-18 05-28-07.png</span><span class="c2">551,4 kB</span><span class="c3">Image</span><span class="c5">05:28</span></div>
<div class="row" style="top:492px"><svg class="ic" style="left:8px;top:7px" width="16" height="14" viewBox="0 0 16 14"><defs><linearGradient id="mg" x1="0" y1="0" x2="1" y2="1"><stop offset="0" stop-color="#a636b6"/><stop offset="1" stop-color="#d058d0"/></linearGradient></defs><rect x="0.8" y="0.8" width="14.3" height="12.2" rx="1.8" fill="url(#mg)"/><path d="M1 1.8 Q1 1 2.5 1 H13.5 Q15 1 15 1.8" stroke="#e8a0e8" stroke-width="0.8" fill="none"/><path d="M3.9 10 L6.4 5.3 L7.8 7.5 L8.4 6.8 L10.4 10 Z" fill="#eec0ee"/><rect x="9.7" y="2.7" width="2" height="2" fill="#eec0ee"/></svg><span class="c1">Screenshot at 2023-06-18 05-27-58.png</span><span class="c2">762,9 kB</span><span class="c3">Image</span><span class="c5">05:27</span></div>
<div class="row" style="top:520px"><i class="ic th1"></i><span class="c1">Screenshot at 2023-06-18 04-43-42.png</span><span class="c2">683,3 kB</span><span class="c3">Image</span><span class="c5">04:43</span></div>
<div class="row" style="top:548px"><i class="ic th2"></i><span class="c1">Screenshot at 2023-06-18 04-15-44.png</span><span class="c2">854,2 kB</span><span class="c3">Image</span><span class="c5">04:15</span></div>
<div class="row" style="top:576px"><i class="ic th3"></i><span class="c1">Screenshot at 2023-06-18 04-06-02.png</span><span class="c2">874,7 kB</span><span class="c3">Image</span><span class="c5">04:06</span></div>
<div class="row" style="top:604px"><i class="ic th3b"></i><span class="c1">Screenshot at 2023-06-18 03-44-24.png</span><span class="c2">838,9 kB</span><span class="c3">Image</span><span class="c5">03:44</span></div>
<div class="row" style="top:632px"><i class="ic th4"></i><span class="c1">Screenshot at 2023-06-18 03-33-40.png</span><span class="c2">742,3 kB</span><span class="c3">Image</span><span class="c5">03:33</span></div>
<div class="row" style="top:660px"><i class="ic th5"></i><span class="c1">Screenshot at 2023-06-18 03-31-04.png</span><span class="c2">715,7 kB</span><span class="c3">Image</span><span class="c5">03:31</span></div>
<div class="row" style="top:688px"><i class="ic th5"></i><span class="c1">Screenshot at 2023-06-18 03-30-42.png</span><span class="c2">667,7 kB</span><span class="c3">Image</span><span class="c5">03:30</span></div>

    </div>
    <div class="a" id="vscroll"><div class="a" style="left:3px;top:3px;width:6px;height:40px;border-radius:3px;background:#9a9a9a"></div></div>
    <div class="a" id="prev">
      <div class="a" style="left:23px;top:296px;width:128px;height:72px;background:#3a3c48;overflow:hidden">
        <div class="a" style="left:0;top:0;width:128px;height:4px;background:#0e3c0e"></div>
        <div class="a" style="left:0;top:1px;width:128px;height:2px;background:repeating-linear-gradient(90deg,#3a7a3a 0,#3a7a3a 3px,#0e3c0e 3px,#0e3c0e 8px)"></div>
        <div class="a" style="left:0;top:5px;width:128px;height:8px;background:#1e9a50"></div>
        <div class="a" style="left:0;top:9px;width:128px;height:4px;background:#3aa868"></div>
        <div class="a" style="left:0;top:36px;width:128px;height:20px;background:#484a58"></div>
        <div class="a" style="left:0;top:69px;width:128px;height:3px;background:#0c6a30"></div>
        <div class="a" style="left:28px;top:6px;width:11px;height:56px;background:#2a2a2a"></div>
        <div class="a" style="left:30px;top:12px;width:8px;height:36px;background:repeating-linear-gradient(#2a2a2a 0,#2a2a2a 1px,#666 1px,#666 2px)"></div>
        <div class="a" style="left:29px;top:29px;width:10px;height:2px;background:#2e8080"></div>
        <div class="a" style="left:39px;top:3px;width:81px;height:66px;background:#f4f4f4"></div>
        <div class="a" style="left:39px;top:5px;width:7px;height:64px;background:#2a3850"></div>
        <div class="a" style="left:40px;top:10px;width:5px;height:56px;background:repeating-linear-gradient(#5a90c0 0,#5a90c0 2px,#2a3850 2px,#2a3850 6px)"></div>
        <div class="a" style="left:46px;top:9px;width:26px;height:60px;background:#fafafa"></div>
        <div class="a" style="left:47px;top:12px;width:5px;height:52px;background:repeating-radial-gradient(circle at 50% 3px,#444 0,#444 2px,transparent 2px,transparent 100%)"></div>
        <div class="a" style="left:47px;top:12px;width:5px;height:54px;background:repeating-linear-gradient(#555 0,#555 4px,#fafafa 4px,#fafafa 6px);border-radius:2px"></div>
        <div class="a" style="left:53px;top:12px;width:17px;height:54px;background:repeating-linear-gradient(#aaa 0,#aaa 1px,#fafafa 1px,#fafafa 3px,#ccc 3px,#ccc 4px,#fafafa 4px,#fafafa 6px)"></div>
        <div class="a" style="left:46px;top:45px;width:26px;height:6px;background:#40a0e0"></div>
        <div class="a" style="left:73px;top:11px;width:47px;height:54px;background:linear-gradient(#c0d890,#a8c878)"></div>
        <div class="a" style="left:81px;top:11px;width:38px;height:53px;background:#3a3030"></div>
        <div class="a" style="left:84px;top:14px;width:33px;height:3px;background:#3a6a6a"></div>
        <div class="a" style="left:84px;top:20px;width:33px;height:5px;background:#3a9a5a"></div>
        <div class="a" style="left:85px;top:25px;width:28px;height:32px;background:#9a6870"></div>
        <div class="a" style="left:90px;top:33px;width:16px;height:14px;background:radial-gradient(#f8e8e0,#d08890 70%)"></div>
        <div class="a" style="left:113px;top:55px;width:6px;height:6px;border-radius:50%;background:#eee"></div>
      </div>
    </div>
  </div>
  <div id="bottom" class="a">
    <div class="a" style="left:11px;top:16px;width:15px;height:15px;border-radius:3px;background:#363636;border:1px solid #1c1c1c"></div>
    <span class="t" style="left:32px;top:15px">Open files read-only</span>
    <div class="a btn" style="left:1434px;top:6px;width:134px;height:35px"><span class="t" style="left:11px;top:8px">All files</span><svg class="a" style="left:110px;top:13px" width="12" height="8" viewBox="0 0 12 8"><path d="M1 1.5 L6 6.5 L11 1.5" stroke="#c8c8c8" stroke-width="1.2" fill="none"/></svg></div>
    <div class="a btn" style="left:1373px;top:54px;width:95px;height:33px"><span class="t" style="left:20px;top:6px">Cancel</span></div>
    <div class="a btn" style="left:1473px;top:54px;width:95px;height:33px"><span class="t" style="left:24px;top:6px">Open</span></div>
  </div>
</div>

<div id="taskbar" class="a">
  <div class="a" style="left:0;top:0;width:1600px;height:1px;background:#1c1c1c"></div>
  <div class="a" style="left:0;top:2px;width:20px;height:28px;background:#3a3a3a;border:1px solid #111;border-radius:5px"><svg class="a" style="left:5px;top:8px" width="8" height="12" viewBox="0 0 8 12"><path d="M6.5 1 L2 6 L6.5 11" stroke="#e0e0e0" stroke-width="1.3" fill="none"/></svg></div>
  <div class="a" style="left:21px;top:6px;width:22px;height:18px;border-radius:3px;background:linear-gradient(90deg,#2a5a58 0,#2a5a58 25%,#5a9a98 30%,#7ab2ae 100%);border:1px solid #1a3a38"></div>
  <svg class="a" style="left:59px;top:8px" width="16" height="16" viewBox="0 0 16 16"><circle cx="8" cy="8" r="6.5" fill="none" stroke="#7ab89a" stroke-width="1.6" stroke-dasharray="15 2.5"/><path d="M5 11.5 L8 4 L11 11.5 M6 9 H10 M4.5 10.5 H11.5" stroke="#7ab89a" stroke-width="1.3" fill="none"/></svg>
  <span class="t" style="left:84px;top:6px;letter-spacing:0.5px">[Software Updater]</span>
  <svg class="a" style="left:276px;top:8px" width="16" height="15" viewBox="0 0 16 15"><path d="M1 3 Q1 1.5 2.5 1.5 H6 L7.5 3 H14 Q15 3 15 4 V13.5 H1 Z" fill="#8a8a8a"/><rect x="1" y="4.5" width="14" height="9" fill="#6a6a6a"/><rect x="5.5" y="6.5" width="5" height="5" fill="none" stroke="#bbb" stroke-width="1"/><rect x="7" y="8" width="2" height="2" fill="#bbb"/></svg>
  <span class="t" style="left:300px;top:6px">Pictures</span>
  <svg class="a" style="left:493px;top:8px" width="15" height="15" viewBox="0 0 15 15"><rect x="0.5" y="0.5" width="14" height="14" rx="1.5" fill="#7a9a8a"/><path d="M3 11.5 H12 M3 12.8 H12" stroke="#3a6a5a" stroke-width="0.6"/><path d="M5 10 L11.5 3.5" stroke="#2a5aa0" stroke-width="2"/></svg>
  <span class="t" style="left:517px;top:6px">[*Unsaved Docume…</span>
  <svg class="a" style="left:708px;top:6px" width="19" height="19" viewBox="0 0 24 24"><use href="#ffx"/></svg>
  <span class="t" style="left:734px;top:6px;letter-spacing:-0.15px">Perfect Max Search …</span>
  <div class="a" style="left:926px;top:8px;width:17px;height:17px;border-radius:50%;background:radial-gradient(circle at 50% 50%,#4a7a9a 0,#2a6a4a 35%,#1a1a1a 70%)"></div>
  <span class="t" style="left:951px;top:6px;letter-spacing:-0.1px">SimpleScreenRecor…</span>
  <div class="a" style="left:1139px;top:0;width:217px;height:29px;background:#2e2e2e;border:1px solid #1a1a1a"><div class="a" style="left:5px;top:7px;width:15px;height:15px;border-radius:50%;background:#30a0e0"><svg class="a" style="left:2px;top:3px" width="11" height="9" viewBox="0 0 11 9"><path d="M1 4 L10 0.5 L8 8 L5 5.5 Z" fill="#fff"/></svg></div><span class="t" style="left:28px;top:5px;letter-spacing:0.2px">Telegram (2421811)</span></div>
  <div class="a" style="left:1357px;top:1px;width:49px;height:29px;background:#6fa8a2;border:1px solid #f0f0f0"><div class="a" style="left:17px;top:8px;width:14px;height:12px;background:#e0e0d8;border:1px solid #777;border-top:2px solid #3a5aa8"></div></div>
  <div class="a" style="left:1406px;top:1px;width:150px;height:29px;background:#0a4422"></div>
  <div class="a" style="left:1456px;top:1px;width:1px;height:29px;background:#1a6232"></div>
  <div class="a" style="left:1506px;top:1px;width:1px;height:29px;background:#1a6232"></div>
  <div class="a" style="left:1559px;top:4px;width:19px;height:22px;border-radius:3px;background:linear-gradient(#e8e8e8,#c0c0c0)"><div class="a" style="left:2px;top:2px;width:15px;height:3px;background:#fff;border:1px solid #999"></div><svg class="a" style="left:3px;top:9px" width="13" height="12" viewBox="0 0 13 12"><path d="M6.5 1 L10 7 M10 7 L3 7 M3 7 L6.5 1" stroke="#2a9a3a" stroke-width="2" fill="none" stroke-dasharray="4 1.5"/></svg></div>
  <div class="a" style="left:1580px;top:2px;width:20px;height:27px;background:#2e2e2e;border:1px solid #111;border-radius:5px"><svg class="a" style="left:6px;top:7px" width="8" height="12" viewBox="0 0 8 12"><path d="M1.5 1 L6 6 L1.5 11" stroke="#e0e0e0" stroke-width="1.3" fill="none"/></svg></div>
</div>
<svg class="a" style="left:471px;top:293px;z-index:50" width="16" height="20" viewBox="0 0 16 20"><path d="M1.5 1.3 V16.8 L5.2 13.3 L7.9 18.7 L10.3 17.6 L7.7 12.4 L12.8 12.2 Z" fill="#222" stroke="#fff" stroke-width="1.1" stroke-linejoin="round"/></svg>
</body></html>
